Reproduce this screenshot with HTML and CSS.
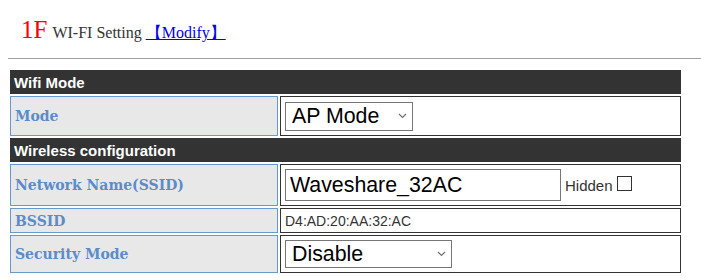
FILE: index.html
```html
<!DOCTYPE html>
<html>
<head>
<meta charset="utf-8">
<link rel="stylesheet" href="styles.css">
</head>
<body>
<div class="title">
  <span class="floor">1F</span>
  <span class="caption">WI-FI Setting</span>
  <a class="modify" href="#">【Modify】</a>
</div>
<hr class="rule">
<table class="settings">
  <colgroup><col class="c-label"><col class="c-value"></colgroup>
  <tr class="head"><th colspan="2">Wifi Mode</th></tr>
  <tr class="r-mode">
    <td class="label">Mode</td>
    <td class="value"><span class="selwrap"><select class="sel sel-mode"><option>AP Mode</option><option>STA Mode</option></select><svg class="chev" width="9" height="6" viewBox="0 0 9 6"><path d="M1 1 L4.5 4.5 L8 1" fill="none" stroke="#6d6d6d" stroke-width="1.1"/></svg></span></td>
  </tr>
  <tr class="head"><th colspan="2">Wireless configuration</th></tr>
  <tr class="r-ssid">
    <td class="label">Network Name(SSID)</td>
    <td class="value"><input class="ssid" type="text" value="Waveshare_32AC"><span class="hidden-lbl">Hidden</span><input class="chk" type="checkbox"></td>
  </tr>
  <tr class="r-bssid">
    <td class="label">BSSID</td>
    <td class="value plain">D4:AD:20:AA:32:AC</td>
  </tr>
  <tr class="r-sec">
    <td class="label">Security Mode</td>
    <td class="value"><span class="selwrap"><select class="sel sel-sec"><option>Disable</option><option>WPA2-PSK</option></select><svg class="chev" width="9" height="6" viewBox="0 0 9 6"><path d="M1 1 L4.5 4.5 L8 1" fill="none" stroke="#6d6d6d" stroke-width="1.1"/></svg></span></td>
  </tr>
</table>
</body>
</html>
```
FILE: styles.css
```css
html, body { margin: 0; padding: 0; background: #fff; overflow: hidden; }
body { width: 701px; height: 280px; }

.title {
  height: 50px;
  padding: 17px 0 0 21px;
  box-sizing: border-box;
  display: flex;
  align-items: baseline;
  font-family: "Liberation Serif", "Times New Roman", serif;
  line-height: 1;
}
.floor { color: #ff0000; font-size: 25px; margin-right: 5px; }
.caption { color: #333; font-size: 16px; }
.modify { color: #0000ee; font-size: 16px; margin-left: 4px; text-decoration: underline; }

.rule {
  margin: 8px 0 0 8px;
  border: 0;
  border-top: 1px solid #a0a0a0;
  height: 0;
  width: 693px;
}

.settings {
  margin: 9px 0 0 8px;
  width: 675px;
  border-collapse: separate;
  border-spacing: 2px;
  table-layout: fixed;
}
.c-label { width: 268px; }
.head th {
  background: #333;
  color: #fff;
  height: 24px;
  padding: 0 4px;
  text-align: left;
  font: bold 15px "Liberation Sans", Arial, sans-serif;
}
.label {
  background: #e8e8e8;
  border: 1px solid #6699cc;
  color: #5b8cc8;
  font: bold 14px "DejaVu Serif", serif;
  padding: 0 4px;
}
.value {
  border: 1px solid #333;
  padding: 0 4px;
  font: 14px "Liberation Sans", Arial, sans-serif;
  color: #333;
}
.r-mode td { height: 38px; }
.r-ssid td { height: 40px; }
.r-bssid td { height: 23px; }
.r-sec td { height: 36px; }

.selwrap { position: relative; display: inline-block; vertical-align: middle; }
.sel {
  -webkit-appearance: none;
  appearance: none;
  display: block;
  font: 21.33px "Liberation Sans", Arial, sans-serif;
  color: #000;
  border: 1px solid #767676;
  border-radius: 0;
  background: #fff;
  height: 29px;
  padding: 0 0 0 6px;
  box-sizing: border-box;
}
.sel-mode { width: 128px; }
.sel-sec { width: 167px; height: 28px; }
.chev { position: absolute; right: 6px; top: 50%; margin-top: -3px; }

.ssid {
  font: 21.33px "Liberation Sans", Arial, sans-serif;
  color: #000;
  width: 276px;
  height: 32px;
  box-sizing: border-box;
  border: 1px solid #767676;
  padding: 0 4px;
  vertical-align: middle;
}
.hidden-lbl { margin-left: 4px; vertical-align: middle; font-size: 15px; }
.chk {
  -webkit-appearance: none;
  appearance: none;
  box-sizing: border-box;
  width: 15px; height: 15px;
  margin: 0 0 0 4px;
  border: 1px solid #333;
  background: #fff;
  vertical-align: middle;
  position: relative; top: -2px;
}
```
